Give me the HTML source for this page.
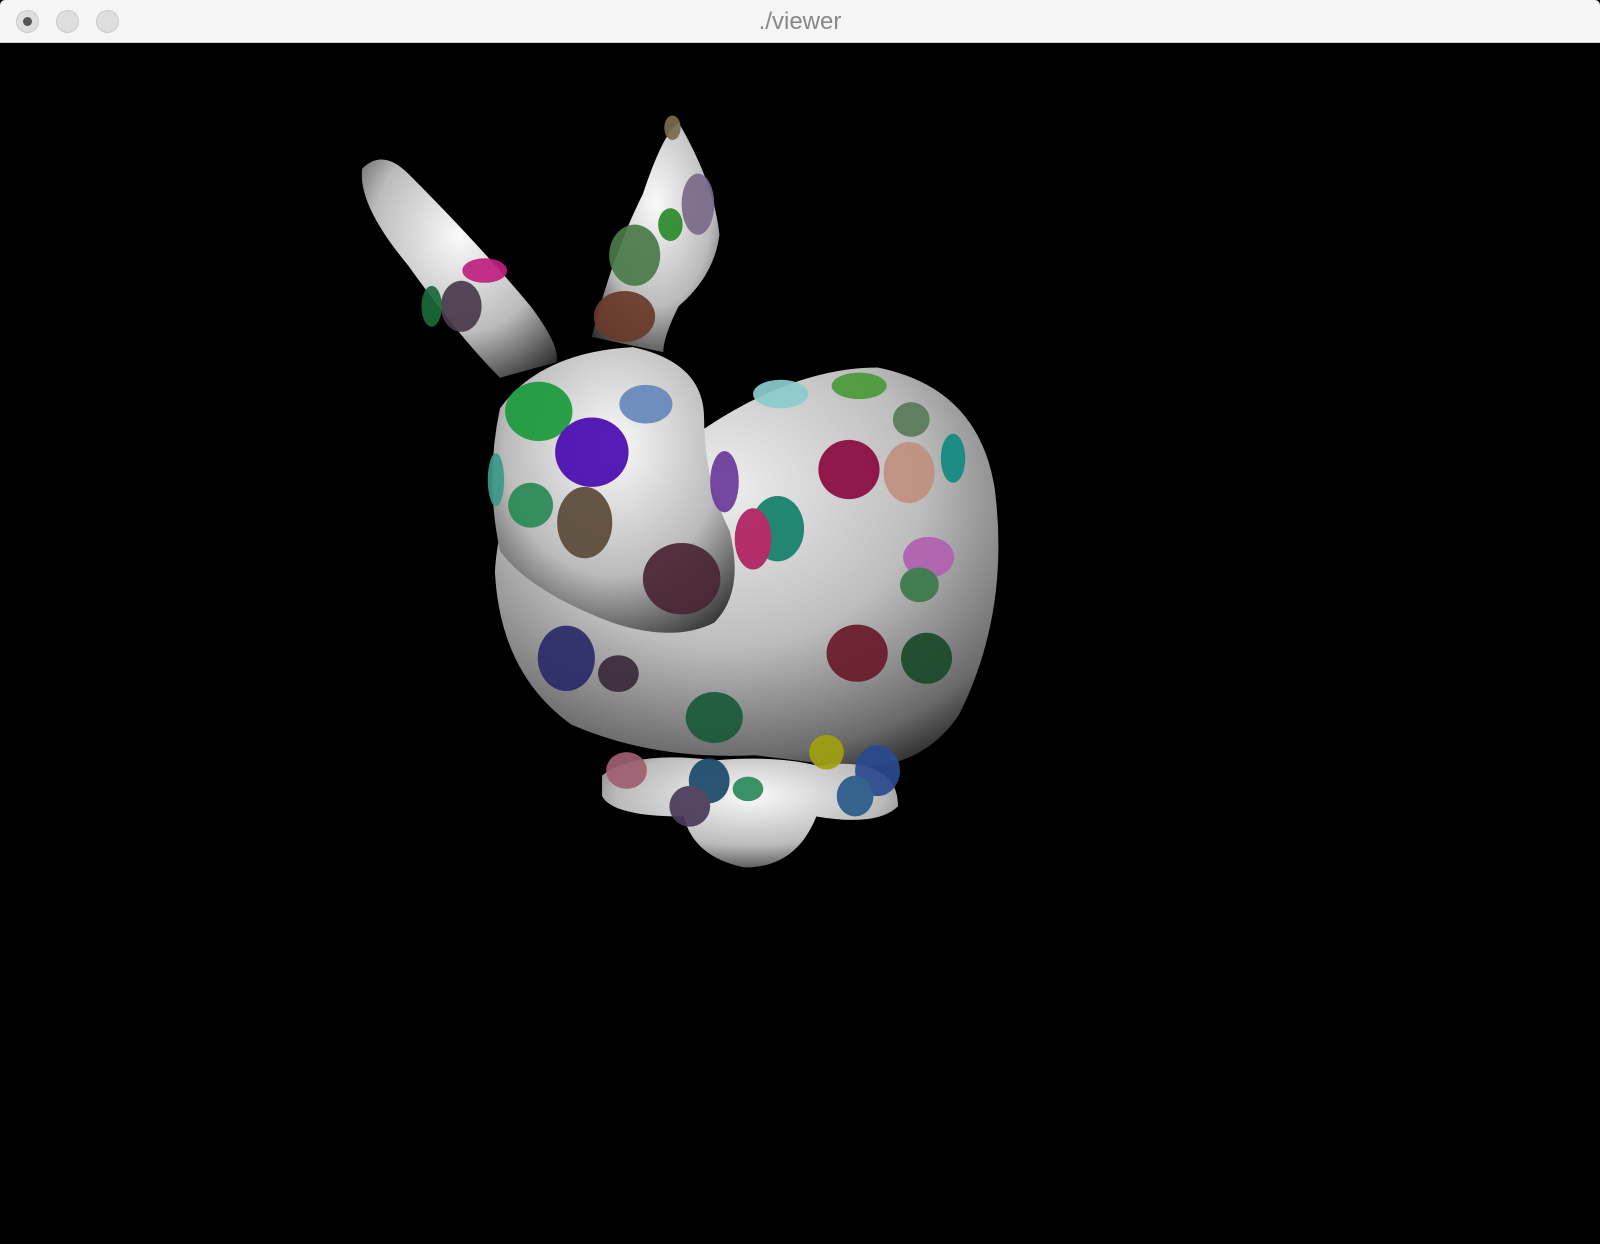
<!DOCTYPE html>
<html><head><style>
html,body{margin:0;padding:0;width:1600px;height:1244px;overflow:hidden;background:#000}
.bar{position:absolute;left:0;top:0;width:1600px;height:43px;background:#f5f5f5;border-bottom:1px solid #cfcfcf;box-sizing:border-box;border-radius:5px 5px 0 0}
.c{position:absolute;top:10px;width:23px;height:23px;border-radius:50%;background:#dedede;border:1px solid #cacaca;box-sizing:border-box}
.t{position:absolute;top:0;left:0;width:1600px;text-align:center;font:24px "Liberation Sans",sans-serif;line-height:44px;color:#888}
svg{position:absolute;left:0;top:43px}
</style></head><body>
<div class="bar"><div class="c" style="left:16px"><div style="width:9px;height:9px;border-radius:50%;background:#555;margin:6px"></div></div><div class="c" style="left:56px"></div><div class="c" style="left:96px"></div><div class="t">./viewer</div></div>
<svg width="1600" height="1201" viewBox="0 42 1568 1177">
<defs>
<radialGradient id="g" cx="0.45" cy="0.3" r="0.8"><stop offset="0" stop-color="#eeeeee"/><stop offset="0.5" stop-color="#bdbdbd"/><stop offset="0.85" stop-color="#6a6a6a"/><stop offset="1" stop-color="#222"/></radialGradient>
<radialGradient id="g2" cx="0.5" cy="0.35" r="0.75"><stop offset="0" stop-color="#fafafa"/><stop offset="0.6" stop-color="#bbbbbb"/><stop offset="1" stop-color="#333"/></radialGradient>
</defs>
<rect x="0" y="42" width="1568" height="1177" fill="#000"/>
<path d="M690 420 Q780 360 860 360 Q960 380 975 480 Q990 600 940 700 Q900 760 820 750 L740 740 Q640 745 560 710 Q490 660 485 560 Q490 470 560 420 Z" fill="url(#g)"/>
<path d="M590 760 Q620 735 700 745 Q760 740 800 750 Q880 740 880 790 Q860 810 800 800 Q780 850 730 850 Q680 840 670 800 Q600 800 590 780 Z" fill="url(#g2)"/>
<path d="M355 165 Q375 145 400 170 Q470 240 520 300 Q550 340 545 355 L490 370 Q450 330 400 260 Q350 200 355 165 Z" fill="url(#g2)"/>
<path d="M580 330 Q600 250 630 190 Q650 130 665 120 Q700 180 705 230 Q700 270 665 300 Q650 330 650 345 Z" fill="url(#g2)"/>
<path d="M490 400 Q530 345 620 340 Q690 355 690 410 Q690 470 715 520 Q730 580 700 610 Q660 630 600 610 Q520 580 490 540 Q475 470 490 400 Z" fill="url(#g2)"/>
<g opacity="0.92">
<ellipse cx="528" cy="403" rx="33" ry="29" fill="#1a9a3a"/>
<ellipse cx="580" cy="443" rx="36" ry="34" fill="#4a0ab0"/>
<ellipse cx="633" cy="396" rx="26" ry="19" fill="#6688bb"/>
<ellipse cx="668" cy="567" rx="38" ry="35" fill="#4a2535"/>
<ellipse cx="573" cy="512" rx="27" ry="35" fill="#5a4a38"/>
<ellipse cx="520" cy="495" rx="22" ry="22" fill="#2a8a55"/>
<ellipse cx="832" cy="460" rx="30" ry="29" fill="#8a0a40"/>
<ellipse cx="891" cy="463" rx="25" ry="30" fill="#c09080"/>
<ellipse cx="842" cy="378" rx="27" ry="13" fill="#4a9a3a"/>
<ellipse cx="765" cy="386" rx="27" ry="14" fill="#8ccccc"/>
<ellipse cx="893" cy="411" rx="18" ry="17" fill="#5a7a5a"/>
<ellipse cx="934" cy="449" rx="12" ry="24" fill="#128a80"/>
<ellipse cx="762" cy="518" rx="26" ry="32" fill="#13806a"/>
<ellipse cx="738" cy="528" rx="18" ry="30" fill="#b02060"/>
<ellipse cx="910" cy="546" rx="25" ry="20" fill="#b060b0"/>
<ellipse cx="901" cy="573" rx="19" ry="17" fill="#3a7a4a"/>
<ellipse cx="840" cy="640" rx="30" ry="28" fill="#6a1a2a"/>
<ellipse cx="555" cy="645" rx="28" ry="32" fill="#2a2a6a"/>
<ellipse cx="606" cy="660" rx="20" ry="18" fill="#3a2a3a"/>
<ellipse cx="700" cy="703" rx="28" ry="25" fill="#1a5a3a"/>
<ellipse cx="810" cy="737" rx="17" ry="17" fill="#a0a010"/>
<ellipse cx="860" cy="755" rx="22" ry="25" fill="#2a4a90"/>
<ellipse cx="838" cy="780" rx="18" ry="20" fill="#2a5a8a"/>
<ellipse cx="614" cy="755" rx="20" ry="18" fill="#a06070"/>
<ellipse cx="695" cy="765" rx="20" ry="22" fill="#1a4a6a"/>
<ellipse cx="676" cy="790" rx="20" ry="20" fill="#4a3a5a"/>
<ellipse cx="733" cy="773" rx="15" ry="12" fill="#2a8a5a"/>
<ellipse cx="908" cy="645" rx="25" ry="25" fill="#1a4a2a"/>
<ellipse cx="622" cy="250" rx="25" ry="30" fill="#4a7a4a"/>
<ellipse cx="612" cy="310" rx="30" ry="25" fill="#6a3a2a"/>
<ellipse cx="452" cy="300" rx="20" ry="25" fill="#4a3a4a"/>
<ellipse cx="475" cy="265" rx="22" ry="12" fill="#c02080"/>
<ellipse cx="684" cy="200" rx="16" ry="30" fill="#7a6a8a"/>
<ellipse cx="657" cy="220" rx="12" ry="16" fill="#2a8a2a"/>
<ellipse cx="659" cy="125" rx="8" ry="12" fill="#7a6a4a"/>
<ellipse cx="710" cy="472" rx="14" ry="30" fill="#6a3a9a"/>
<ellipse cx="423" cy="300" rx="10" ry="20" fill="#1a6a3a"/>
<ellipse cx="486" cy="470" rx="8" ry="26" fill="#3a9a8a"/>
</g>
</svg>
</body></html>
